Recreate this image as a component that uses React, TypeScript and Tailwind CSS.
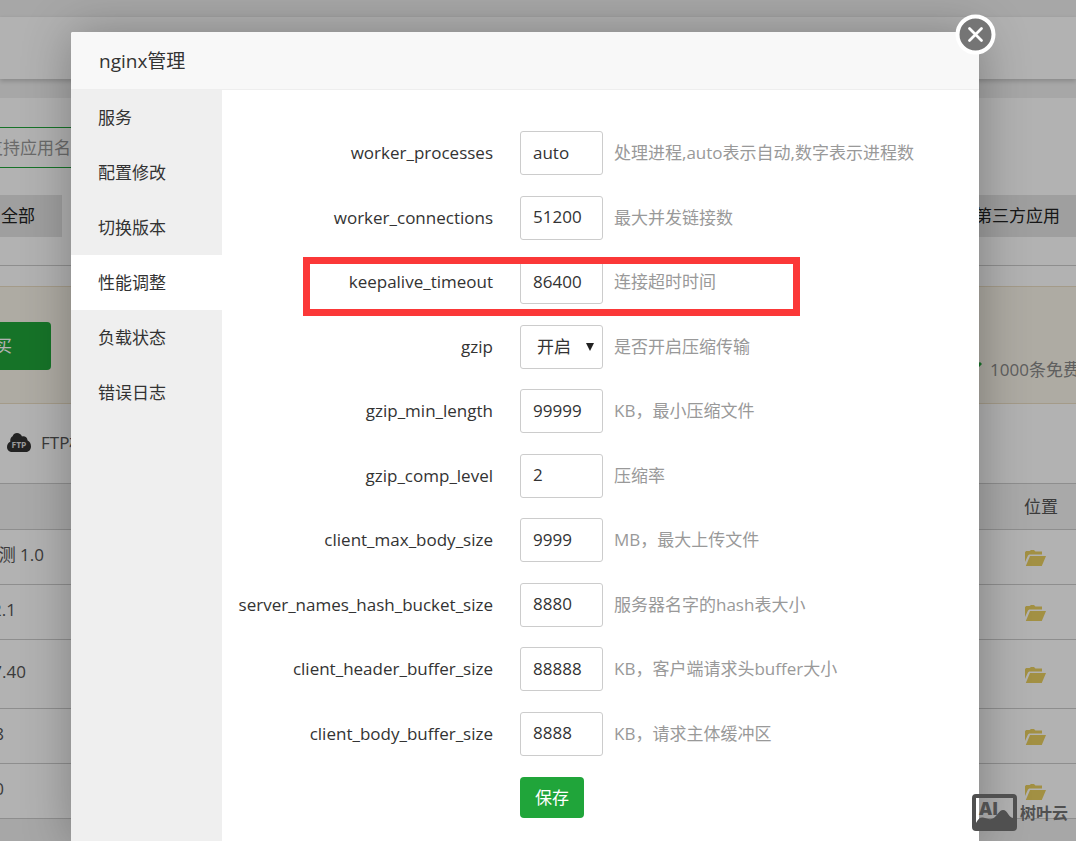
import { useState } from 'react'
import clsx from 'clsx'

interface Field {
  name: string
  value: string
  hint: string
  options?: string[]
  highlighted?: boolean
}

const MENU = ['服务', '配置修改', '切换版本', '性能调整', '负载状态', '错误日志']

const FIELDS: Field[] = [
  { name: 'worker_processes', value: 'auto', hint: '处理进程,auto表示自动,数字表示进程数' },
  { name: 'worker_connections', value: '51200', hint: '最大并发链接数' },
  { name: 'keepalive_timeout', value: '86400', hint: '连接超时时间', highlighted: true },
  { name: 'gzip', value: '开启', hint: '是否开启压缩传输', options: ['开启', '关闭'] },
  { name: 'gzip_min_length', value: '99999', hint: 'KB，最小压缩文件' },
  { name: 'gzip_comp_level', value: '2', hint: '压缩率' },
  { name: 'client_max_body_size', value: '9999', hint: 'MB，最大上传文件' },
  { name: 'server_names_hash_bucket_size', value: '8880', hint: '服务器名字的hash表大小' },
  { name: 'client_header_buffer_size', value: '88888', hint: 'KB，客户端请求头buffer大小' },
  { name: 'client_body_buffer_size', value: '8888', hint: 'KB，请求主体缓冲区' },
]

// Name column is scrolled out on the left, so only the end of each name shows
const APPS = [
  { name: '测 1.0', width: 'w-11', height: 'h-[55px]' },
  { name: '2.1', width: 'w-4', height: 'h-[55px]' },
  { name: '7.40', width: 'w-[26px]', height: 'h-[69px]' },
  { name: '8', width: 'w-1', height: 'h-[55px]' },
  { name: '0', width: 'w-1', height: 'h-[55px]' },
]

function FolderIcon() {
  return (
    <svg viewBox="0 0 21 16" className="block h-4 w-[21px] fill-[#e9cf60]">
      <path d="M0 12V2.2L1 1h3.6L6 0h3l1.4 1.4H17v3.2H4.2L3 5.6z" />
      <path d="M5 6h16l-4.2 10H.8z" />
    </svg>
  )
}

function FtpIcon() {
  return (
    <svg viewBox="0 0 24 19" className="h-[19px] w-6 shrink-0">
      <path
        d="M5 19c-3 0-5-2.200-5-5 0-2.600 1.300-4.500 3.300-5.300C3 5.800 4 4 5.600 3.200 6.400 1.200 8 0 10 0c2.200 0 4.200 1.300 5 3.500 2.700-.7 5.200.7 5.600 4C22.800 8.500 24 10.700 24 13.200c0 3.300-2 5.800-5 5.800z"
        fill="#333"
      />
      <text x="12" y="15.200" textAnchor="middle" fontSize="8.500" fontWeight="700" fill="#ddd" fontFamily="Open Sans, sans-serif">
        FTP
      </text>
    </svg>
  )
}

function BackgroundPage() {
  return (
    <div className="min-h-screen overflow-hidden bg-[#f0f0f0] text-[#555]">
      <div className="mt-[17px] h-[62px] bg-white shadow-[0_2px_5px_rgba(0,0,0,0.2)]" />

      <main className="mt-[19px] bg-white pt-[29px]">
        <div className="flex h-[41px] w-1/3 items-center justify-start overflow-hidden border-y border-[#20a53a]">
          <span className="-ml-3.5 whitespace-nowrap text-[#999]">支持应用名称</span>
        </div>

        <div className="mt-[27px] flex justify-between text-[#222]">
          <button type="button" className="h-[42px] w-[62px] bg-[#e4e4e4] pl-px text-left">全部</button>
          <button type="button" className="h-[42px] w-[115px] bg-[#e4e4e4] pr-4 text-right">第三方应用</button>
        </div>

        <div className="mt-7 border-t border-[#ccc]" />

        <section className="mt-5 flex h-[118px] items-start justify-between overflow-hidden border-y border-[#ebdfc4] bg-[#faf5ea] pt-[35px]">
          <button type="button" className="h-12 w-[51px] overflow-hidden rounded-r bg-[#20a53a] text-white">
            <span className="flex w-3 justify-end">买</span>
          </button>
          <div className="mt-9 flex w-[114px] items-center gap-2 text-[#888]">
            <svg viewBox="0 0 20 16" className="h-4 w-5 shrink-0" fill="none" stroke="#20a53a" strokeWidth="3">
              <path d="M2 8l5 5L19 1" />
            </svg>
            <span className="whitespace-nowrap">1000条免费短信</span>
          </div>
        </section>

        <div className="flex h-[79px] items-center gap-2.5 pb-0.5 pl-[7px]">
          <FtpIcon />
          <span>FTP权限</span>
        </div>

        <table className="w-full table-fixed border-collapse text-left">
          <thead>
            <tr className="h-[46px] border-y border-[#ccc] bg-[#f3f3f3]">
              <th className="p-0" aria-label="名称" />
              <th className="w-[52px] p-0 font-normal">位置</th>
            </tr>
          </thead>
          <tbody>
            {APPS.map(app => (
              <tr key={app.name} className={clsx('border-b border-[#ccc]', app.height)}>
                <td className="p-0 pb-1">
                  <div className={clsx('flex justify-end overflow-hidden whitespace-nowrap', app.width)}>{app.name}</div>
                </td>
                <td className="p-0 pt-0.5 pl-px">
                  <FolderIcon />
                </td>
              </tr>
            ))}
          </tbody>
        </table>
      </main>
    </div>
  )
}

function FieldRow({ field }: { field: Field }) {
  const [value, setValue] = useState(field.value)

  return (
    <div className="relative flex h-11 items-center">
      <label htmlFor={field.name} className="w-[271px] shrink-0 text-right">
        {field.name}
      </label>
      {field.options ? (
        <div className="relative ml-[27px] shrink-0">
          <select
            id={field.name}
            value={value}
            onChange={e => setValue(e.target.value)}
            className="block h-11 w-[83px] appearance-none rounded-[3px] border border-[#ccc] bg-white pl-4"
          >
            {field.options.map(option => (
              <option key={option}>{option}</option>
            ))}
          </select>
          <svg viewBox="0 0 8 8" className="pointer-events-none absolute top-[18px] right-[9px] size-2 fill-[#222]">
            <path d="M0 0h8L4 8z" />
          </svg>
        </div>
      ) : (
        <input
          id={field.name}
          type="text"
          value={value}
          onChange={e => setValue(e.target.value)}
          className="ml-[27px] h-11 w-[83px] shrink-0 rounded-[3px] border border-[#ccc] bg-white px-3 pb-0.5"
        />
      )}
      <span className="ml-[11px] whitespace-nowrap text-[#999]">{field.hint}</span>
      {field.highlighted && (
        <div className="pointer-events-none absolute -top-[3px] left-[81px] h-[59px] w-[497px] border-7 border-[#fb3838]" />
      )}
    </div>
  )
}

function NginxDialog() {
  const [active, setActive] = useState('性能调整')

  return (
    <div
      role="dialog"
      aria-labelledby="dialog-title"
      className="relative mr-[97px] ml-[71px] flex flex-1 flex-col rounded-t-xs bg-white text-[#333] shadow-[1px_1px_50px_rgba(0,0,0,0.3)]"
    >
      <h2 id="dialog-title" className="flex h-[58px] shrink-0 items-center rounded-t-xs border-b border-[#eee] bg-[#f8f8f8] px-7 text-[19px]">
        nginx管理
      </h2>

      <button type="button" aria-label="关闭" className="absolute -top-[18px] -right-[17px]">
        <svg viewBox="0 0 41 41" className="block size-[41px]">
          <circle cx="20.500" cy="20.500" r="18" fill="#757575" stroke="#fff" strokeWidth="4" />
          <path d="M14.500 14.500l12 12M26.500 14.500l-12 12" stroke="#fff" strokeWidth="2.800" strokeLinecap="round" />
        </svg>
      </button>

      <div className="flex flex-1">
        <nav className="w-[151px] shrink-0 bg-[#efefef]">
          {MENU.map(item => (
            <button
              key={item}
              type="button"
              onClick={() => setActive(item)}
              className={clsx('block h-[55px] w-full px-[27px] text-left', item === active && 'bg-white')}
            >
              {item}
            </button>
          ))}
        </nav>

        <form className="flex-1 pt-[41px]" onSubmit={e => e.preventDefault()}>
          <div className="flex h-[625px] flex-col justify-between">
            {FIELDS.map(field => (
              <FieldRow key={field.name} field={field} />
            ))}
          </div>
          <button type="submit" className="mt-[21px] ml-[298px] h-[41px] w-16 rounded bg-[#20a53a] text-white">
            保存
          </button>
        </form>
      </div>
    </div>
  )
}

function Watermark() {
  return (
    <div className="absolute right-2 bottom-2.5 flex items-center gap-[3px] text-[#505050]">
      <svg viewBox="0 0 45 37" className="h-[37px] w-[45px]">
        <rect x="2" y="2" width="41" height="33" rx="2" fill="none" stroke="#505050" strokeWidth="4" />
        <path d="M4 29c2-4 4-6 7-5.500 4 .5 6 3 10 1 4-2 6-8.500 10-8.500 5 0 5 8 11 8v10H4z" fill="#505050" />
        <text x="7" y="21" fontSize="18" fontWeight="800" fill="#505050" fontFamily="Open Sans, sans-serif">
          AI
        </text>
      </svg>
      <span className="text-base font-bold">树叶云</span>
    </div>
  )
}

export default function App() {
  return (
    <div className="relative h-screen overflow-hidden font-['Open_Sans','Noto_Sans_CJK_SC',sans-serif] text-[17px] leading-6">
      <BackgroundPage />
      <div className="absolute inset-0 flex flex-col bg-black/30 pt-8">
        <NginxDialog />
      </div>
      <Watermark />
    </div>
  )
}
